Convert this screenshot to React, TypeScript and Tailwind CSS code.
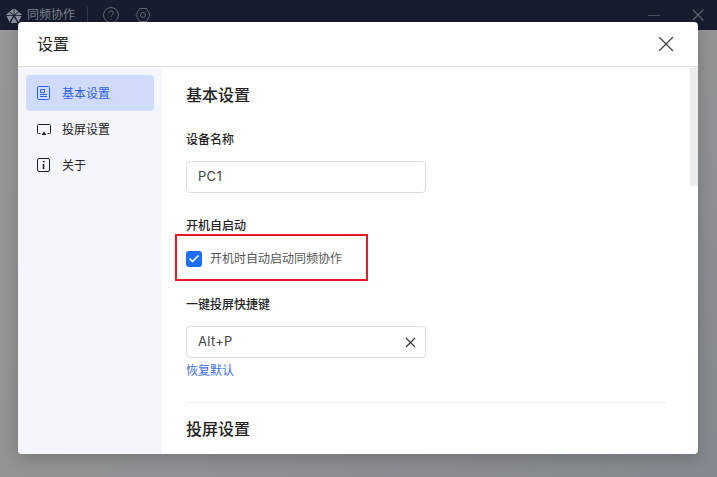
import { Check, X } from 'lucide-react'

const cjk = "font-['Inter','Noto_Sans_CJK_SC',sans-serif]"

function ProfileIcon({ className }: { className?: string }) {
    return (
        <svg viewBox="0 0 13 14" fill="none" stroke="currentColor" strokeWidth="1" className={className}>
            <rect x="0.500" y="0.500" width="12" height="13" rx="1" />
            <path d="M3.500 3.500h4v3h-4z" />
            <path d="M3 8.500h7M3 10.500h7" />
        </svg>
    )
}

function CastIcon({ className }: { className?: string }) {
    return (
        <svg viewBox="0 0 14 11" fill="none" stroke="currentColor" strokeWidth="1" className={className}>
            <path d="M3.500 9.500H1.500a1 1 0 0 1-1-1v-7a1 1 0 0 1 1-1h11a1 1 0 0 1 1 1v7a1 1 0 0 1-1 1h-2" />
            <path d="M7 7.500l2.500 3.500h-5z" fill="currentColor" stroke="none" />
        </svg>
    )
}

function InfoIcon({ className }: { className?: string }) {
    return (
        <svg viewBox="0 0 13 14" fill="none" stroke="currentColor" strokeWidth="1" className={className}>
            <rect x="0.500" y="0.500" width="12" height="13" rx="1.500" />
            <path d="M6.500 6v5" strokeWidth="1.600" />
            <path d="M6.800 3v1.500" strokeWidth="1.600" />
        </svg>
    )
}

function Logo() {
    return (
        <svg viewBox="0 0 16 15" className="w-[16px] h-[15px] text-[#8d9099]" fill="currentColor">
            <path d="M7.600 0.500 3.500 3.500 7.600 6.500z" />
            <path d="M8.400 0.500 12.500 3.500 8.400 6.500z" />
            <path d="M3 4 0 7 7 7.300z" />
            <path d="M13 4 16 7 9 7.300z" />
            <path d="M0.500 8 7 8 3.500 14z" />
            <path d="M15.500 8 9 8 12.500 14z" />
            <path d="M8 9 11.500 15H4.500z" />
        </svg>
    )
}

function TitleBar() {
    return (
        <div className="h-[30px] bg-[#171d2f] flex items-center pl-[6px] pr-[9px] shrink-0">
            <Logo />
            <span className="ml-[5px] text-[12px] text-[#7e828d]">同频协作</span>
            <div className="ml-[12px] w-px h-[16px] bg-[#33384a]" />
            <svg viewBox="0 0 16 16" className="ml-[15px] w-[16px] h-[16px] text-[#62666f]" fill="none" stroke="currentColor" strokeWidth="1">
                <circle cx="8" cy="8" r="7.500" />
                <path d="M5.800 6.200a2.200 2.200 0 1 1 3.400 1.800c-.8.500-1.200 1-1.200 1.800" />
                <path d="M8 11.300v1.200" />
            </svg>
            <svg viewBox="0 0 16 16" className="ml-[16px] w-[16px] h-[16px] text-[#62666f]" fill="none" stroke="currentColor" strokeWidth="1">
                <path d="M4.500 1.500h7L15 8l-3.500 6.500h-7L1 8z" />
                <circle cx="8" cy="8" r="2.500" />
            </svg>
            <div className="ml-auto w-[12px] h-px bg-[#4e525d]" />
            <X className="ml-[28px] w-[20px] h-[20px] text-[#62666f]" strokeWidth={1.300} />
        </div>
    )
}

function NavItem({ icon, label, active }: { icon: React.ReactNode; label: string; active?: boolean }) {
    return (
        <div className={`h-[36px] flex items-center pl-[11px] rounded-[4px] text-[12px] ${active ? 'bg-[#d0dbfb] text-[#2f5fe6]' : 'text-[#222222]'}`}>
            <span className="w-[14px] flex">{icon}</span>
            <span className="ml-[11px] pt-[2px]">{label}</span>
        </div>
    )
}

function Field({ value, clearable }: { value: string; clearable?: boolean }) {
    return (
        <div className="w-[240px] h-[32px] border border-[#dedede] rounded-[4px] flex items-center pl-[11px] pr-[6px] text-[13px] text-[#444444] tracking-[0.3px]">
            <span>{value}</span>
            {clearable && <X className="ml-auto w-[17px] h-[17px] text-[#333333]" strokeWidth={1.500} />}
        </div>
    )
}

export default function App() {
    return (
        <div className={`relative w-[717px] h-[477px] overflow-hidden flex flex-col ${cjk}`}>
            <TitleBar />
            <div className="flex-1 bg-gradient-to-br from-[#979797] via-[#939393] to-[#83898f]" />

            {/* settings dialog */}
            <div className="absolute left-[18px] top-[22px] w-[680px] h-[432px] bg-white rounded-[4px] overflow-hidden flex flex-col shadow-[0_4px_16px_rgba(0,0,0,0.2)]">
                <div className="h-[45px] shrink-0 border-b border-[#e2e2e2] flex items-center pl-[20px] pr-[19px]">
                    <span className="text-[16px] text-[#222222] -ml-px">设置</span>
                    <X className="ml-auto w-[26px] h-[26px] text-[#444444]" strokeWidth={1.200} />
                </div>

                <div className="flex-1 flex min-h-0">
                    <div className="w-[144px] shrink-0 bg-[#f5f6fb] px-[8px] pt-[8px]">
                        <NavItem active label="基本设置" icon={<ProfileIcon className="w-[13px] h-[14px]" />} />
                        <NavItem label="投屏设置" icon={<CastIcon className="w-[14px] h-[11px]" />} />
                        <NavItem label="关于" icon={<InfoIcon className="w-[13px] h-[14px]" />} />
                    </div>

                    <div className="relative flex-1 min-w-0 pl-[24px] pr-[32px] overflow-hidden">
                        <h2 className="mt-[16px] text-[16px] leading-[24px] font-medium text-[#222222]">基本设置</h2>
                        <div className="mt-[24px] text-[12px] leading-[18px] font-medium text-[#222222]">设备名称</div>
                        <div className="mt-[12px]"><Field value="PC1" /></div>
                        <div className="mt-[24px] text-[12px] leading-[18px] font-medium text-[#222222]">开机自启动</div>
                        <div className="mt-[16px] h-[16px] flex items-center">
                            <span className="w-[16px] h-[16px] rounded-[3px] bg-[#1e6fff] flex items-center justify-center">
                                <Check className="w-[12px] h-[12px] text-white" strokeWidth={3.500} />
                            </span>
                            <span className="ml-[8px] text-[12px] text-[#555555]">开机时自动启动同频协作</span>
                        </div>
                        <div className="mt-[29px] text-[12px] leading-[18px] font-medium text-[#222222]">一键投屏快捷键</div>
                        <div className="mt-[12px]"><Field value="Alt+P" clearable /></div>
                        <div className="mt-[4px] text-[12px] leading-[18px] text-[#3f6fe8]">恢复默认</div>
                        <div className="mt-[22px] h-px bg-[#eeeeee]" />
                        <h2 className="mt-[14px] text-[16px] leading-[24px] font-medium text-[#222222]">投屏设置</h2>

                        {/* scrollbar thumb */}
                        <div className="absolute right-0 top-0 w-[8px] h-[119px] bg-[#ededed] rounded-[2px]" />
                        {/* annotation box */}
                        <div className="absolute left-[13px] top-[167px] w-[193px] h-[47px] border-2 border-[#e81c24]" />
                    </div>
                </div>
            </div>
        </div>
    )
}
